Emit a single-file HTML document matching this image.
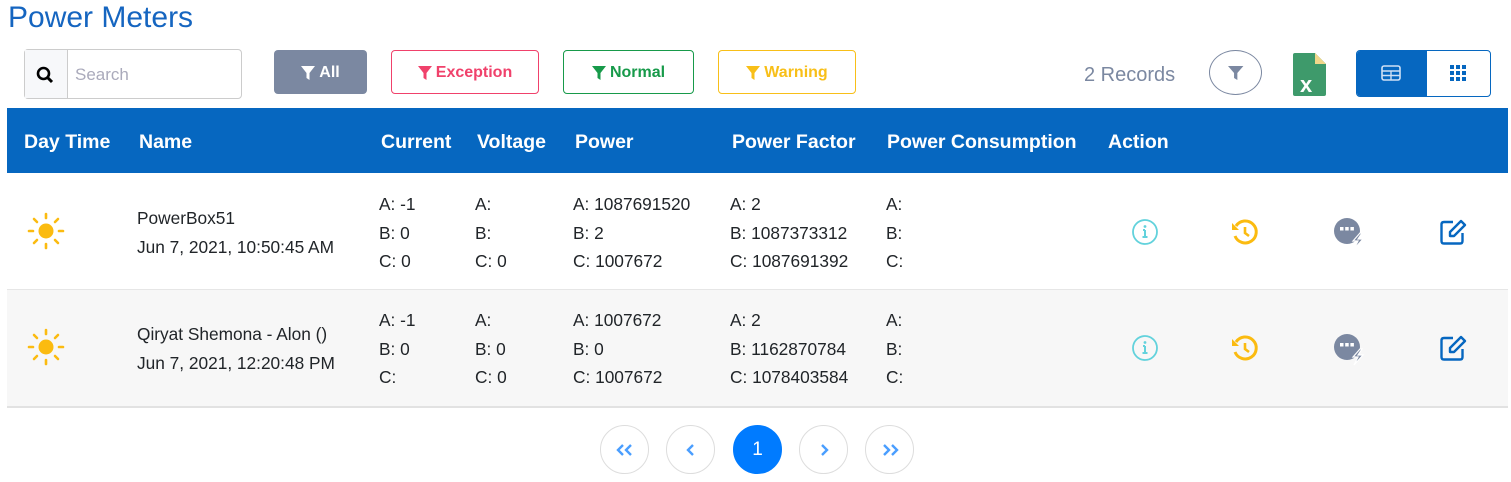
<!DOCTYPE html>
<html><head><meta charset="utf-8"><style>
body{margin:0;width:1511px;height:482px;background:#fff;font-family:"Liberation Sans",sans-serif;position:relative;overflow:hidden;color:#212529}
.a{position:absolute;white-space:nowrap}
.btn{position:absolute;top:50px;height:44px;border-radius:4px;box-sizing:border-box;display:flex;align-items:center;justify-content:center;font-size:16px;font-weight:bold;gap:4px;padding-top:2px}
.th{position:absolute;top:131px;color:#fff;font-weight:bold;font-size:19.5px}
.c{position:absolute;font-size:17.3px;line-height:28.5px;color:#212529;white-space:nowrap}
.pg{position:absolute;top:425px;width:49px;height:49px;border-radius:50%;border:1px solid #ddd;box-sizing:border-box;display:flex;align-items:center;justify-content:center;color:#4a9eff;font-size:19px}
</style></head><body>
<div class="a" style="left:8px;top:1px;font-size:30px;color:#1565c0">Power Meters</div>
<div class="a" style="left:24px;top:49px;width:218px;height:50px;border:1px solid #ccc;border-radius:4px;box-sizing:border-box"></div>
<div class="a" style="left:25px;top:50px;width:42px;height:48px;background:#f7f8fa;border-right:1px solid #ccc"></div>
<svg class="a" style="left:36px;top:66px" width="18" height="18" viewBox="0 0 18 18"><circle cx="7.5" cy="7.5" r="5.5" fill="none" stroke="#000" stroke-width="2.6"/><path d="M11.5 11.5L16 16" stroke="#000" stroke-width="3"/></svg>
<div class="a" style="left:75px;top:65px;font-size:17px;color:#aab">Search</div>
<svg width="0" height="0"><defs><path id="f" d="M0 0h14l-5.5 7v7l-3-2v-5z"/></defs></svg>
<div class="btn" style="left:274px;width:93px;background:#7b88a1;color:#fff"><svg width="14" height="14"><use href="#f" fill="#fff"/></svg>All</div>
<div class="btn" style="left:391px;width:148px;border:1px solid #f0416b;color:#f0416b"><svg width="14" height="14"><use href="#f" fill="#f0416b"/></svg>Exception</div>
<div class="btn" style="left:563px;width:131px;border:1px solid #179a4a;color:#179a4a"><svg width="14" height="14"><use href="#f" fill="#179a4a"/></svg>Normal</div>
<div class="btn" style="left:718px;width:138px;border:1px solid #f8bf18;color:#f8bf18"><svg width="14" height="14"><use href="#f" fill="#f8bf18"/></svg>Warning</div>
<div class="a" style="left:1084px;top:64px;font-size:20px;color:#7b88a1">2 Records</div>
<div class="a" style="left:1209px;top:50px;width:53px;height:45px;border:1px solid #7b88a1;border-radius:50%;box-sizing:border-box"></div>
<svg class="a" style="left:1228px;top:66px" width="16" height="14"><use href="#f" fill="#7b88a1" transform="scale(1.1 1)"/></svg>
<svg class="a" style="left:1293px;top:53px" width="33" height="43" viewBox="0 0 33 43"><path d="M0 2Q0 0 2 0h20l11 11v30q0 2-2 2H2q-2 0-2-2z" fill="#3e9a6b"/><path d="M22 0v11h11z" fill="#f0d78a"/><text x="7" y="39" fill="#fff" font-size="22" font-weight="bold" font-family="Liberation Sans">x</text></svg>
<div class="a" style="left:1356px;top:50px;width:135px;height:47px;border:1px solid #0667c0;border-radius:4px;box-sizing:border-box;overflow:hidden"><div style="width:70px;height:100%;background:#0667c0"></div></div>
<svg class="a" style="left:1381px;top:65px" width="20" height="16"><rect x="1" y="1" width="18" height="14" rx="2" fill="none" stroke="#cfe0f5" stroke-width="1.6"/><path d="M1 6h18M1 10.5h18M10 6v9" stroke="#cfe0f5" stroke-width="1.4"/></svg>
<svg class="a" style="left:1450px;top:65px" width="16" height="16"><g fill="#0667c0"><rect x="0" y="0" width="4" height="4"/><rect x="6" y="0" width="4" height="4"/><rect x="12" y="0" width="4" height="4"/><rect x="0" y="6" width="4" height="4"/><rect x="6" y="6" width="4" height="4"/><rect x="12" y="6" width="4" height="4"/><rect x="0" y="12" width="4" height="4"/><rect x="6" y="12" width="4" height="4"/><rect x="12" y="12" width="4" height="4"/></g></svg>
<div class="a" style="left:7px;top:108px;width:1501px;height:65px;background:#0667c0"></div>
<div class="th" style="left:24px">Day Time</div><div class="th" style="left:139px">Name</div><div class="th" style="left:381px">Current</div><div class="th" style="left:477px">Voltage</div><div class="th" style="left:575px">Power</div><div class="th" style="left:732px">Power Factor</div><div class="th" style="left:887px">Power Consumption</div><div class="th" style="left:1108px">Action</div>
<div class="a" style="left:7px;top:289px;width:1501px;height:1px;background:#e6e6e6"></div>
<div class="a" style="left:7px;top:290px;width:1501px;height:116px;background:#f7f7f7;border-bottom:2px solid #e2e2e2"></div>
<svg width="0" height="0"><defs>
<g id="sun"><circle cx="20" cy="20" r="7.5" fill="#fbbb10"/><g stroke="#fbbb10" stroke-width="2.6" stroke-linecap="round"><path d="M20 3v4M20 33v4M3 20h4M33 20h4M8 8l3 3M29 29l3 3M8 32l3-3M29 11l3-3"/></g></g>
<g id="ic">
<circle cx="1145" cy="0" r="12" fill="none" stroke="#62d2dc" stroke-width="1.8"/><path d="M1145 -2v7M1142.5 5h5M1143 -2h2" stroke="#62d2dc" stroke-width="2"/><circle cx="1145" cy="-5.5" r="1.4" fill="#62d2dc"/>
<path d="M1236 -6A11 11 0 1 1 1235 4" fill="none" stroke="#fbbb10" stroke-width="3"/><path d="M1232 -9l0 7h7z" fill="#fbbb10"/><path d="M1245 -5v6l4 3" fill="none" stroke="#fbbb10" stroke-width="2.6"/>
<circle cx="1347" cy="-1" r="13" fill="#7b88a1"/><rect x="1340" y="-5" width="3.5" height="3.5" fill="#fff"/><rect x="1345.2" y="-5" width="3.5" height="3.5" fill="#fff"/><rect x="1350.4" y="-5" width="3.5" height="3.5" fill="#fff"/><path d="M1360 1l-7 8h5l-4 8 9-10h-5l4-6z" fill="#7b88a1" stroke="#fff" stroke-width="1.2"/>
<path d="M1453 -10h-9q-2.5 0-2.5 2.5v16.5q0 2.5 2.5 2.5h16q2.5 0 2.5-2.5v-8" fill="none" stroke="#0667c0" stroke-width="2.4"/><path d="M1450 4v-4l11-11 4 4-11 11z" fill="none" stroke="#0667c0" stroke-width="2.4" stroke-linejoin="round"/>
</g></defs></svg>
<svg class="a" style="left:26px;top:211px" width="40" height="40"><use href="#sun"/></svg>
<svg class="a" style="left:26px;top:327px" width="40" height="40"><use href="#sun"/></svg>
<svg class="a" style="left:0;top:0" width="1511" height="482"><use href="#ic" transform="translate(0 232)"/><use href="#ic" transform="translate(0 348)"/></svg>
<div class="c" style="left:137px;top:204px">PowerBox51<br>Jun 7, 2021, 10:50:45 AM</div>
<div class="c" style="left:379px;top:190px">A: -1<br>B: 0<br>C: 0</div>
<div class="c" style="left:475px;top:190px">A:<br>B:<br>C: 0</div>
<div class="c" style="left:573px;top:190px">A: 1087691520<br>B: 2<br>C: 1007672</div>
<div class="c" style="left:730px;top:190px">A: 2<br>B: 1087373312<br>C: 1087691392</div>
<div class="c" style="left:886px;top:190px">A:<br>B:<br>C:</div>
<div class="c" style="left:137px;top:320px">Qiryat Shemona - Alon ()<br>Jun 7, 2021, 12:20:48 PM</div>
<div class="c" style="left:379px;top:306px">A: -1<br>B: 0<br>C:</div>
<div class="c" style="left:475px;top:306px">A:<br>B: 0<br>C: 0</div>
<div class="c" style="left:573px;top:306px">A: 1007672<br>B: 0<br>C: 1007672</div>
<div class="c" style="left:730px;top:306px">A: 2<br>B: 1162870784<br>C: 1078403584</div>
<div class="c" style="left:886px;top:306px">A:<br>B:<br>C:</div>
<div class="pg" style="left:600px"><svg width="20" height="14"><path d="M8 2l-5 5 5 5M16 2l-5 5 5 5" fill="none" stroke="#4a9eff" stroke-width="2.4"/></svg></div>
<div class="pg" style="left:666px"><svg width="12" height="14"><path d="M8 2l-5 5 5 5" fill="none" stroke="#4a9eff" stroke-width="2.4"/></svg></div>
<div class="pg" style="left:733px;background:#007bff;border-color:#007bff;color:#fff">1</div>
<div class="pg" style="left:799px"><svg width="12" height="14"><path d="M4 2l5 5-5 5" fill="none" stroke="#4a9eff" stroke-width="2.4"/></svg></div>
<div class="pg" style="left:865px"><svg width="20" height="14"><path d="M4 2l5 5-5 5M12 2l5 5-5 5" fill="none" stroke="#4a9eff" stroke-width="2.4"/></svg></div>
</body></html>
